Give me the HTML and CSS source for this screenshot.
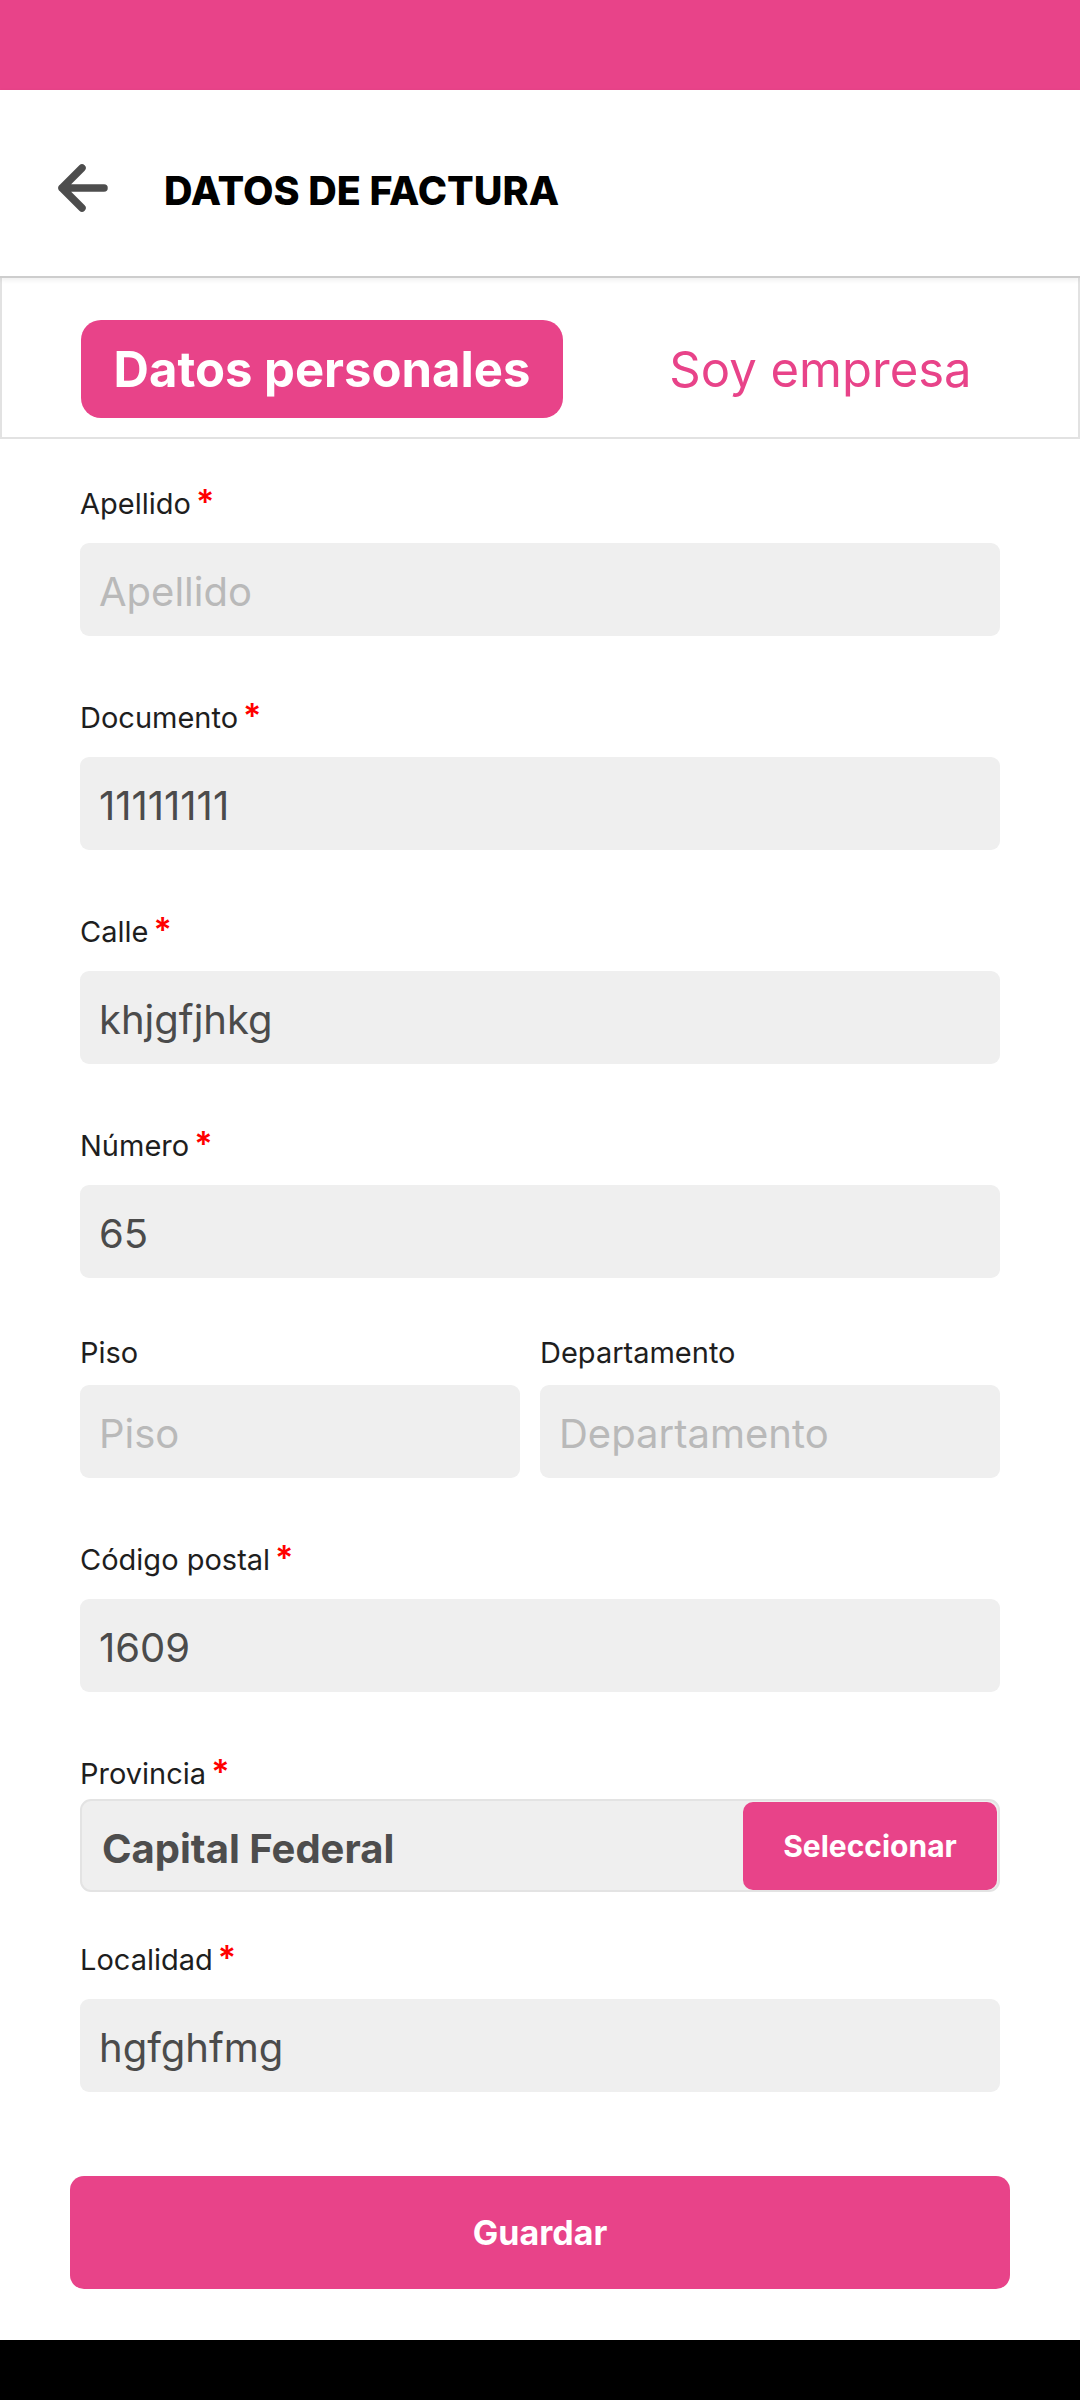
FILE: index.html
```html
<!DOCTYPE html>
<html lang="es">
<head>
<meta charset="utf-8">
<title>Datos de factura</title>
<link rel="stylesheet" href="styles.css">
</head>
<body>
<div class="screen">
  <div class="statusbar"></div>
  <header class="topbar">
    <svg class="back" width="56" height="56" viewBox="0 0 56 56" aria-hidden="true">
      <path d="M50 28 H8 M28 8 L8 28 L28 48" fill="none" stroke="#4d4d4d" stroke-width="7.5" stroke-linecap="round" stroke-linejoin="round"/>
    </svg>
    <h1 class="title">DATOS DE FACTURA</h1>
  </header>
  <nav class="tabs">
    <div class="tab tab-active">Datos personales</div>
    <div class="tab">Soy empresa</div>
  </nav>
  <main class="form">
    <div class="field">
      <div class="label req">Apellido<span class="star">*</span></div>
      <div class="input placeholder">Apellido</div>
    </div>
    <div class="field">
      <div class="label req">Documento<span class="star">*</span></div>
      <div class="input">11111111</div>
    </div>
    <div class="field">
      <div class="label req">Calle<span class="star">*</span></div>
      <div class="input">khjgfjhkg</div>
    </div>
    <div class="field">
      <div class="label req">Número<span class="star">*</span></div>
      <div class="input">65</div>
    </div>
    <div class="field row">
      <div class="col">
        <div class="label">Piso</div>
        <div class="input placeholder">Piso</div>
      </div>
      <div class="col">
        <div class="label">Departamento</div>
        <div class="input placeholder">Departamento</div>
      </div>
    </div>
    <div class="field">
      <div class="label req">Código postal<span class="star">*</span></div>
      <div class="input">1609</div>
    </div>
    <div class="field field-select">
      <div class="label req">Provincia<span class="star">*</span></div>
      <div class="select">
        <span class="select-value">Capital Federal</span>
        <span class="select-btn">Seleccionar</span>
      </div>
    </div>
    <div class="field">
      <div class="label req">Localidad<span class="star">*</span></div>
      <div class="input">hgfghfmg</div>
    </div>
  </main>
  <div class="actions">
    <button class="save" type="button">Guardar</button>
  </div>
  <div class="navbar"></div>
</div>
</body>
</html>
```

FILE: styles.css
```css
* {
  box-sizing: border-box;
}

html, body {
  margin: 0;
  padding: 0;
  background: #ffffff;
}

body {
  font-family: Inter, "Noto Sans", "Liberation Sans", sans-serif;
  color: #1e1e1e;
}

.screen {
  width: 1080px;
  min-height: 2400px;
  display: flex;
  flex-direction: column;
}

.statusbar {
  height: 90px;
  background: #e84389;
}

.topbar {
  position: relative;
  z-index: 2;
  height: 188px;
  display: flex;
  align-items: center;
  padding: 16px 0 0 54px;
  background: #ffffff;
  border-bottom: 2px solid #cdcdcd;
  box-shadow: 0 2px 5px rgba(0, 0, 0, 0.07);
}

.back {
  display: block;
  flex: none;
  margin-top: -6px;
}

.title {
  margin: 0 0 0 54px;
  font-size: 39.5px;
  font-weight: 800;
  color: #000000;
  letter-spacing: 0;
}

.tabs {
  display: flex;
  align-items: flex-start;
  height: 161px;
  padding: 42px 0 0 79px;
  border: 2px solid #e2e2e2;
  border-top: none;
  background: #ffffff;
}

.tab {
  height: 98px;
  display: flex;
  align-items: center;
  justify-content: center;
  font-size: 49px;
  color: #e84389;
  flex: 1;
}

.tab-active {
  flex: none;
  width: 482px;
  background: #e84389;
  color: #ffffff;
  font-weight: 700;
  border-radius: 20px;
}

.form {
  display: flex;
  flex-direction: column;
  padding: 40px 80px 0;
}

.field + .field {
  margin-top: 57px;
}

.field-select + .field {
  margin-top: 43px;
}

.label {
  height: 36px;
  margin-bottom: 14px;
  font-size: 29px;
  line-height: 36px;
  color: #1e1e1e;
  white-space: nowrap;
}

.label.req {
  height: 50px;
  padding-top: 7px;
}

.star {
  margin-left: 5px;
  font-size: 34px;
  font-weight: 600;
  line-height: 0;
  color: #ff0000;
}

.input {
  height: 93px;
  padding: 5px 19px 0;
  border-radius: 9px;
  background: #efefef;
  font-size: 40px;
  line-height: 88px;
  color: #4b4b4b;
  white-space: nowrap;
}

.input.placeholder {
  color: #b9b9b9;
}

.row {
  display: grid;
  grid-template-columns: 440px 1fr;
  column-gap: 20px;
}

.field-select .label {
  margin-bottom: 0;
}

.select {
  height: 93px;
  display: flex;
  align-items: stretch;
  padding: 1px 1px 0 20px;
  border: 2px solid #e3e3e3;
  border-radius: 11px;
  background: #efefef;
}

.select-value {
  flex: 1;
  display: flex;
  align-items: center;
  padding-top: 4px;
  font-size: 40px;
  font-weight: 700;
  color: #4d4d4d;
  white-space: nowrap;
}

.select-btn {
  flex: none;
  width: 254px;
  height: 88px;
  display: flex;
  align-items: center;
  justify-content: center;
  border-radius: 10px;
  background: #e84389;
  color: #ffffff;
  font-size: 30px;
  font-weight: 700;
}

.actions {
  padding: 84px 70px 0;
}

.save {
  display: block;
  width: 100%;
  height: 113px;
  border: none;
  border-radius: 14px;
  background: #e84389;
  color: #ffffff;
  font-family: Inter, "Noto Sans", "Liberation Sans", sans-serif;
  font-size: 34px;
  font-weight: 700;
  padding: 0;
}

.navbar {
  margin-top: auto;
  height: 60px;
  background: #000000;
}
```
